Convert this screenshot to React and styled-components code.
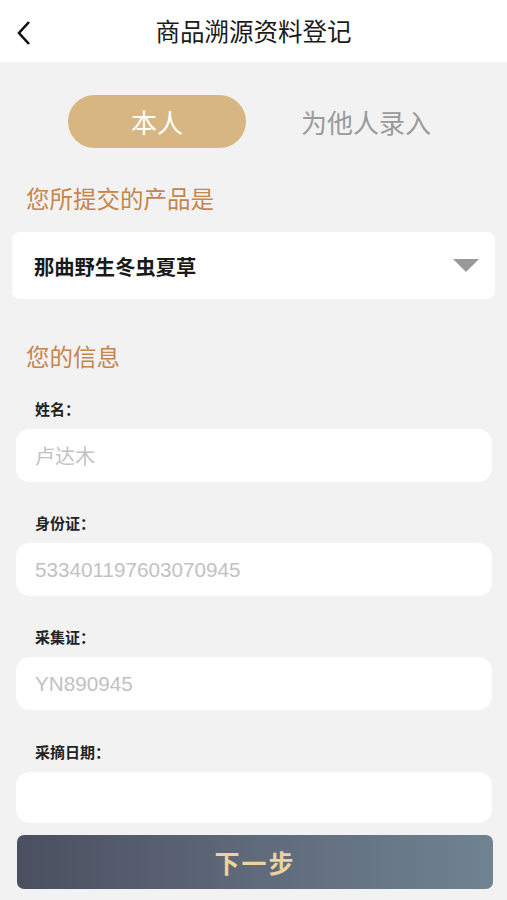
import React from "react";
import styled, { createGlobalStyle } from "styled-components";

const Global = createGlobalStyle`
  html, body { margin: 0; padding: 0; background: #f2f2f2; }
  body { font-family: "Noto Sans CJK SC", "Noto Sans", sans-serif; }
  * { box-sizing: border-box; }
`;

const Page = styled.div`
  width: 507px;
  height: 900px;
  background: #f2f2f2;
  display: flex;
  flex-direction: column;
  overflow: hidden;
`;

const Header = styled.header`
  height: 62px;
  background: #fff;
  position: relative;
  display: flex;
  align-items: center;
  justify-content: center;
`;

const BackBtn = styled.button`
  position: absolute;
  left: 12px;
  top: 17px;
  width: 24px;
  height: 32px;
  padding: 0;
  border: 0;
  background: none;
  display: flex;
  align-items: center;
  justify-content: center;
`;

const Title = styled.h1`
  margin: 0 0 2px 0;
  font-size: 24.5px;
  font-weight: 400;
  color: #1a1a1a;
`;

const Body = styled.main`
  display: flex;
  flex-direction: column;
  padding: 0 12px;
`;

const Tabs = styled.div`
  display: flex;
  align-items: center;
  margin-top: 33px;
  padding-left: 56px;
  gap: 55px;
`;

const Tab = styled.button`
  height: 53px;
  border: 0;
  font-family: inherit;
  font-size: 26px;
  padding: 0;
  border-radius: 27px;
  width: ${(p) => (p.$active ? "178px" : "auto")};
  background: ${(p) => (p.$active ? "#d7b682" : "transparent")};
  color: ${(p) => (p.$active ? "#fff" : "#9a9a9a")};
`;

const SectionTitle = styled.h2`
  margin: ${(p) => p.$mt}px 0 0 14px;
  font-size: 23.5px;
  line-height: 28px;
  font-weight: 400;
  color: #c6854b;
`;

const Select = styled.div`
  margin-top: 20px;
  height: 67px;
  background: #fff;
  border-radius: 8px;
  display: flex;
  align-items: center;
  justify-content: space-between;
  padding: 0 16px 0 22px;
`;

const SelectText = styled.span`
  font-size: 20.3px;
  font-weight: 700;
  color: #1a1a1a;
`;

const Field = styled.div`
  display: flex;
  flex-direction: column;
  padding: 0 3px 0 4px;
  margin-top: ${(p) => p.$mt}px;
`;

const Label = styled.label`
  margin-left: 19px;
  font-size: 15px;
  line-height: 20px;
  font-weight: 700;
  color: #222;
`;

const InputBox = styled.div`
  margin-top: 10px;
  height: ${(p) => p.$h || 53}px;
  background: #fff;
  border-radius: 14px;
  display: flex;
  align-items: center;
  padding: 0 19px;
`;

const Placeholder = styled.span`
  font-size: ${(p) => (p.$latin ? "20.7px" : "20px")};
  color: #c2c2c2;
  font-family: ${(p) => (p.$latin ? '"Liberation Sans", "Noto Sans CJK SC", sans-serif' : "inherit")};
`;

const NextButton = styled.button`
  margin: 12px 2px 0 5px;
  height: 54px;
  border: 0;
  border-radius: 7px;
  background: linear-gradient(90deg, #4b4f5f 0%, #5f6a7b 50%, #6f8391 100%);
  color: #ecd49b;
  font-family: inherit;
  font-size: 25px;
  font-weight: 700;
  letter-spacing: 2px;
`;

const fields = [
  { label: "姓名：", value: "卢达木", mt: 29 },
  { label: "身份证：", value: "533401197603070945", latin: true, mt: 31 },
  { label: "采集证：", value: "YN890945", latin: true, mt: 31 },
  { label: "采摘日期：", value: "", mt: 32, h: 51 },
];

export default function App() {
  return (
    <Page>
      <Global />
      <Header>
        <BackBtn aria-label="返回">
          <svg width="16" height="26" viewBox="0 0 16 26">
            <path d="M13 2 L3 13 L13 24" fill="none" stroke="#111" strokeWidth="2.6" />
          </svg>
        </BackBtn>
        <Title>商品溯源资料登记</Title>
      </Header>
      <Body>
        <Tabs>
          <Tab $active>本人</Tab>
          <Tab>为他人录入</Tab>
        </Tabs>
        <SectionTitle $mt={36}>您所提交的产品是</SectionTitle>
        <Select>
          <SelectText>那曲野生冬虫夏草</SelectText>
          <svg width="26" height="13" viewBox="0 0 26 13">
            <path d="M0 0 H26 L13 13 Z" fill="#999" />
          </svg>
        </Select>
        <SectionTitle $mt={43}>您的信息</SectionTitle>
        {fields.map((f, i) => (
          <Field key={i} $mt={f.mt}>
            <Label>{f.label}</Label>
            <InputBox $h={f.h}>
              <Placeholder $latin={f.latin}>{f.value}</Placeholder>
            </InputBox>
          </Field>
        ))}
        <NextButton>下一步</NextButton>
      </Body>
    </Page>
  );
}
